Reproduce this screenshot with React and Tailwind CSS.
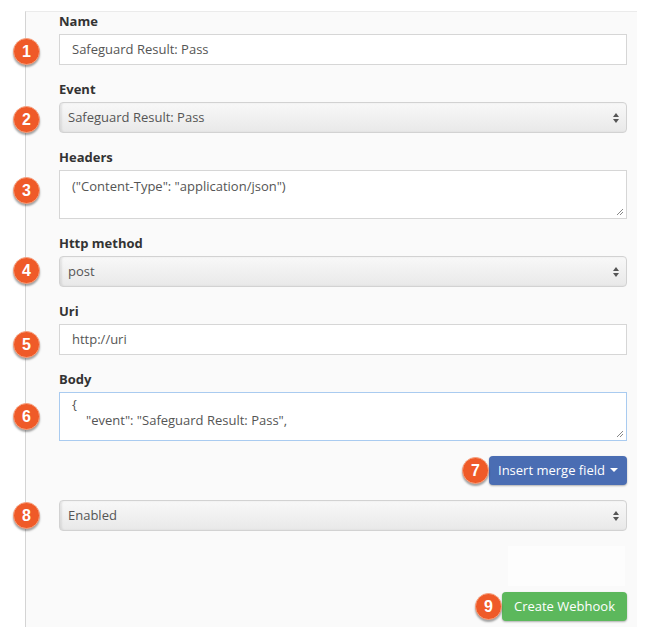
import React from 'react'

const font = { fontFamily: '"Open Sans", "Liberation Sans", sans-serif' }

const Badge = ({ n, className }) => (
  <div
    className={`absolute w-[27px] h-[27px] rounded-full bg-[#ef5a28] border border-[#f7a07e] shadow-[0_2px_2px_rgba(0,0,0,0.35)] flex items-center justify-center text-white text-[16px] font-bold ${className}`}
    style={{ fontFamily: '"Liberation Sans", Arial, sans-serif' }}
  >
    {n}
  </div>
)

const Label = ({ children }) => (
  <div className="h-[18px] leading-[18px] mb-[4px] text-[13px] font-bold text-[#333]">{children}</div>
)

const Arrows = () => (
  <svg width="8" height="12" viewBox="0 0 8 12" className="absolute right-[6px] top-1/2 -translate-y-1/2">
    <path d="M4 1 L7 5 L1 5 Z" fill="#555" />
    <path d="M4 11 L7 7 L1 7 Z" fill="#555" />
  </svg>
)

const Resize = () => (
  <svg width="8" height="8" viewBox="0 0 8 8" className="absolute right-[2px] bottom-[2px]">
    <path d="M1 7 L7 1 M4 7 L7 4" stroke="#888" strokeWidth="1" />
  </svg>
)

const TextInput = ({ value }) => (
  <div className="h-[31px] bg-white border border-[#d6d6d6] flex items-center pl-[12px] text-[13px] text-[#555]">
    {value}
  </div>
)

const Select = ({ value }) => (
  <div className="relative h-[31px] rounded-[4px] border border-[#d2d2d2] bg-gradient-to-b from-[#f8f8f8] to-[#e9e9e9] shadow-[inset_2px_0_2px_rgba(0,0,0,0.08)] flex items-center pl-[8px] text-[13px] text-[#555]">
    {value}
    <Arrows />
  </div>
)

const Field = ({ label, badge, badgeTop, children, last }) => (
  <div className={last ? '' : 'mb-[15px]'}>
    {label && <Label>{label}</Label>}
    <div className="relative">
      <Badge n={badge} className={`left-[-46px] ${badgeTop}`} />
      {children}
    </div>
  </div>
)

export default function App() {
  return (
    <div className="w-[659px] h-[639px] bg-white pt-[11px] pl-[25px]" style={font}>
      <div className="w-[612px] h-[616px] bg-[#fafafa] border-l border-l-[#d4d4d4] border-t border-t-[#ebebeb] pl-[33px] pr-[10px] flex flex-col">
        <Field label="Name" badge="1" badgeTop="top-[4px]">
          <TextInput value="Safeguard Result: Pass" />
        </Field>
        <Field label="Event" badge="2" badgeTop="top-[4px]">
          <Select value="Safeguard Result: Pass" />
        </Field>
        <Field label="Headers" badge="3" badgeTop="top-[7px]">
          <div className="relative h-[49px] bg-white border border-[#d6d6d6] pl-[12px] pt-[6px] text-[13px] text-[#555]">
            ("Content-Type": "application/json")
            <Resize />
          </div>
        </Field>
        <Field label="Http method" badge="4" badgeTop="top-[1px]">
          <Select value="post" />
        </Field>
        <Field label="Uri" badge="5" badgeTop="top-[7px]">
          <TextInput value="http://uri" />
        </Field>
        <Field label="Body" badge="6" badgeTop="top-[11px]">
          <div className="relative h-[49px] bg-white border border-[#a9cbf0] pl-[12px] pt-[3px] text-[13px] leading-[16px] text-[#555]">
            <div>{'{'}</div>
            <div className="pl-[14px]">"event": "Safeguard Result: Pass",</div>
            <Resize />
          </div>
        </Field>
        <div className="relative flex justify-end mb-[15px]">
          <div className="relative">
            <Badge n="7" className="left-[-27px] top-[1px] z-10" />
            <div className="h-[29px] px-[9px] rounded-[4px] bg-[#4a6db3] shadow-[0_1px_2px_rgba(0,0,0,0.3)] text-white text-[13px] flex items-center gap-[5px]">
              Insert merge field
              <svg width="8" height="5" viewBox="0 0 8 5"><path d="M0 0 L8 0 L4 4 Z" fill="#fff" /></svg>
            </div>
          </div>
        </div>
        <Field label={null} badge="8" badgeTop="top-[2px]" last>
          <Select value="Enabled" />
        </Field>
        <div className="flex justify-end mt-[15px]">
          <div className="w-[117px] h-[40px] mr-[2px] bg-[#fdfdfd]" />
        </div>
        <div className="flex justify-end mt-[6px]">
          <div className="relative">
            <Badge n="9" className="left-[-27px] top-[1px] z-10" />
            <div className="h-[29px] px-[12px] rounded-[4px] bg-[#5cb85c] shadow-[0_1px_2px_rgba(0,0,0,0.3)] text-white text-[13px] flex items-center">
              Create Webhook
            </div>
          </div>
        </div>
      </div>
    </div>
  )
}
